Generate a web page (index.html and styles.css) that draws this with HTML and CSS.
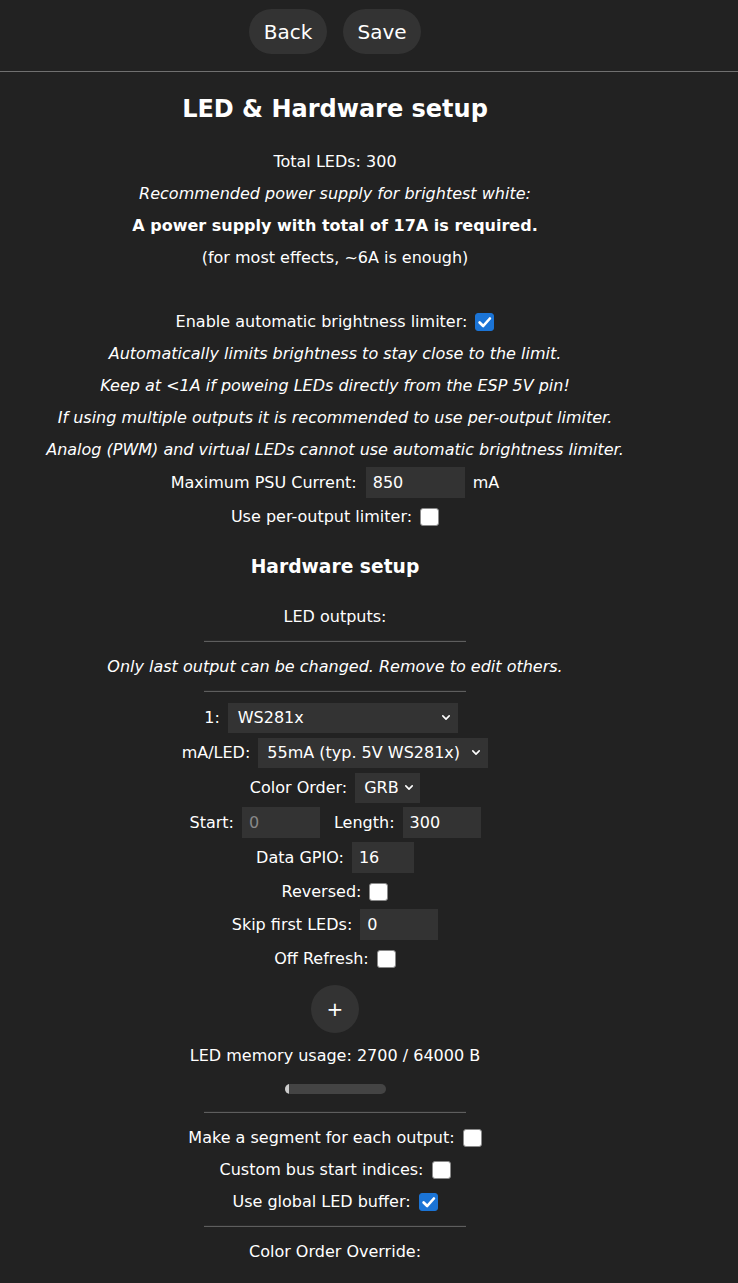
FILE: index.html
```html
<!DOCTYPE html>
<html lang="en">
<head>
<meta charset="utf-8">
<title>LED Settings</title>
<link rel="stylesheet" href="styles.css">
</head>
<body>
<div class="toprow">
  <button class="btn" type="button">Back</button>
  <button class="btn" type="button">Save</button>
</div>
<div class="toprule"></div>
<div class="page">
  <h2 class="title">LED &amp; Hardware setup</h2>
  <div class="ln">Total LEDs: 300</div>
  <div class="ln"><i>Recommended power supply for brightest white:</i></div>
  <div class="ln"><b>A power supply with total of 17A is required.</b></div>
  <div class="ln">(for most effects, ~6A is enough)</div>
  <div class="ln"></div>
  <div class="row crow">Enable automatic brightness limiter: <input type="checkbox" class="cb" checked></div>
  <div class="ln"><i>Automatically limits brightness to stay close to the limit.</i></div>
  <div class="ln"><i>Keep at &lt;1A if poweing LEDs directly from the ESP 5V pin!</i></div>
  <div class="ln"><i>If using multiple outputs it is recommended to use per-output limiter.</i></div>
  <div class="ln"><i>Analog (PWM) and virtual LEDs cannot use automatic brightness limiter.</i></div>
  <div class="row irow psu">Maximum PSU Current: <input class="inp w99" type="text" value="850"> <span class="unit">mA</span></div>
  <div class="row crow">Use per-output limiter: <input type="checkbox" class="cb"></div>

  <h3 class="sub">Hardware setup</h3>
  <div class="ln">LED outputs:</div>
  <hr class="sep">
  <div class="ln"><i>Only last output can be changed. Remove to edit others.</i></div>
  <hr class="sep">
  <div class="bus">
    <div class="row irow r1">1: <span class="sel w230">WS281x<svg class="chev" viewBox="0 0 10 6"><path d="M1 1 L5 5 L9 1"/></svg></span></div>
    <div class="row irow">mA/LED: <span class="sel w230 tight">55mA (typ. 5V WS281x)<svg class="chev" viewBox="0 0 10 6"><path d="M1 1 L5 5 L9 1"/></svg></span></div>
    <div class="row irow">Color Order: <span class="sel w65">GRB<svg class="chev" viewBox="0 0 10 6"><path d="M1 1 L5 5 L9 1"/></svg></span></div>
    <div class="row irow">
      <span class="grp">Start: <input class="inp w78" type="text" value="0" disabled></span>
      <span class="grp">Length: <input class="inp w78" type="text" value="300"></span>
    </div>
    <div class="row irow">Data GPIO: <input class="inp w62" type="text" value="16"></div>
    <div class="row crow">Reversed: <input type="checkbox" class="cb"></div>
    <div class="row irow">Skip first LEDs: <input class="inp w78" type="text" value="0"></div>
    <div class="row crow">Off Refresh: <input type="checkbox" class="cb"></div>
  </div>
  <div class="addrow"><button class="plus" type="button">+</button></div>
  <div class="ln">LED memory usage: 2700 / 64000 B</div>
  <div class="ln barln"><span class="dbar"><span class="dfill" style="width:4.2%"></span></span></div>
  <hr class="sep">
  <div class="row crow">Make a segment for each output: <input type="checkbox" class="cb"></div>
  <div class="row crow">Custom bus start indices: <input type="checkbox" class="cb"></div>
  <div class="row crow">Use global LED buffer: <input type="checkbox" class="cb" checked></div>
  <hr class="sep">
  <div class="ln">Color Order Override:</div>
</div>
</body>
</html>
```
FILE: styles.css
```css
html, body {
  margin: 0;
  background: #222;
}
body {
  color: #fff;
  font-family: "DejaVu Sans", Verdana, sans-serif;
  font-size: 16px;
  line-height: 32px;
  text-align: center;
  height: 1283px;
  overflow: hidden;
}
.toprow {
  width: 670px;
  height: 71px;
  box-sizing: border-box;
  padding-top: 9px;
  display: flex;
  justify-content: center;
  align-items: flex-start;
  gap: 16px;
}
.btn {
  width: 78px;
  height: 45px;
  border: 0;
  border-radius: 23px;
  background: #333;
  color: #fff;
  font-family: "DejaVu Sans", Verdana, sans-serif;
  font-size: 20px;
  padding: 0;
  margin: 0;
}
.toprule {
  height: 1px;
  background: #707070;
}
.page {
  width: 670px;
  padding-top: 1px;
}
.title {
  margin: 12px 0;
  font-size: 24px;
  line-height: 48px;
  font-weight: bold;
}
.ln {
  box-sizing: border-box;
  height: 32px;
  padding-top: 1px;
  line-height: 32px;
  white-space: nowrap;
}
.row {
  display: flex;
  justify-content: center;
  align-items: center;
  gap: 8px;
  white-space: nowrap;
}
.crow {
  box-sizing: border-box;
  height: 32px;
  padding-top: 2px;
}
.irow { height: 35px; }
.psu .unit { margin-left: -1px; }
.psu { gap: 9px; }
.sub {
  margin: 16px 0 15px;
  font-size: 18.7px;
  line-height: 37px;
  font-weight: bold;
}
.sep {
  width: 262px;
  margin: 8px auto;
  border: 0;
  border-top: 1px solid #2a2a2a;
  border-bottom: 1px solid #5e5e5e;
  height: 0;
}
.bus { padding-top: 0; }
.r1 { padding-right: 8px; }
.inp {
  box-sizing: border-box;
  height: 31px;
  margin: 0;
  border: 0;
  background: #333;
  color: #fff;
  font-family: "DejaVu Sans", Verdana, sans-serif;
  font-size: 16px;
  padding: 0 7px;
  outline: none;
}
.inp:disabled { color: #888; }
.w99 { width: 99px; }
.w78 { width: 78px; }
.w62 { width: 62px; }
.grp {
  display: inline-flex;
  align-items: center;
  gap: 8px;
}
.row .grp + .grp { margin-left: 6px; }
.sel {
  box-sizing: border-box;
  height: 30px;
  display: inline-flex;
  align-items: center;
  justify-content: space-between;
  background: #333;
  color: #fff;
  padding: 0 8px 0 10px;
  text-align: left;
}
.sel.tight { padding: 0 8px 0 9px; }
.w230 { width: 230px; }
.w65 { width: 65px; padding: 0 7px 0 9px; }
.chev {
  width: 8px;
  height: 5px;
  flex: none;
  margin-left: 3px;
  overflow: visible;
}
.chev path {
  fill: none;
  stroke: #fff;
  stroke-width: 2;
  stroke-linecap: round;
  stroke-linejoin: round;
}
.cb {
  -webkit-appearance: none;
  appearance: none;
  box-sizing: border-box;
  width: 19px;
  height: 18px;
  margin: 0;
  border: 1px solid #8a8a8a;
  border-radius: 3px;
  background: #fff;
}
.cb:checked {
  border-color: #1b74d6;
  background: #1b74d6 url("data:image/svg+xml;utf8,<svg xmlns='http://www.w3.org/2000/svg' viewBox='0 0 18 18'><path d='M4 9.5 L7.5 13 L14 5.5' fill='none' stroke='white' stroke-width='2.6' stroke-linecap='round' stroke-linejoin='round'/></svg>") center / 18px 18px no-repeat;
}
.addrow {
  height: 48px;
  margin: 11px 0 6px;
  display: flex;
  justify-content: center;
}
.plus {
  width: 48px;
  height: 48px;
  border: 0;
  border-radius: 50%;
  background: #333;
  color: #fff;
  font-family: "DejaVu Sans", Verdana, sans-serif;
  font-size: 20px;
  padding: 0;
}
.barln {
  display: flex;
  justify-content: center;
  align-items: center;
}
.dbar {
  display: block;
  width: 101px;
  height: 10px;
  border-radius: 5px;
  background: #444;
  overflow: hidden;
  margin-top: 2px;
}
.dfill {
  display: block;
  height: 10px;
  background: #ccc;
}
```
